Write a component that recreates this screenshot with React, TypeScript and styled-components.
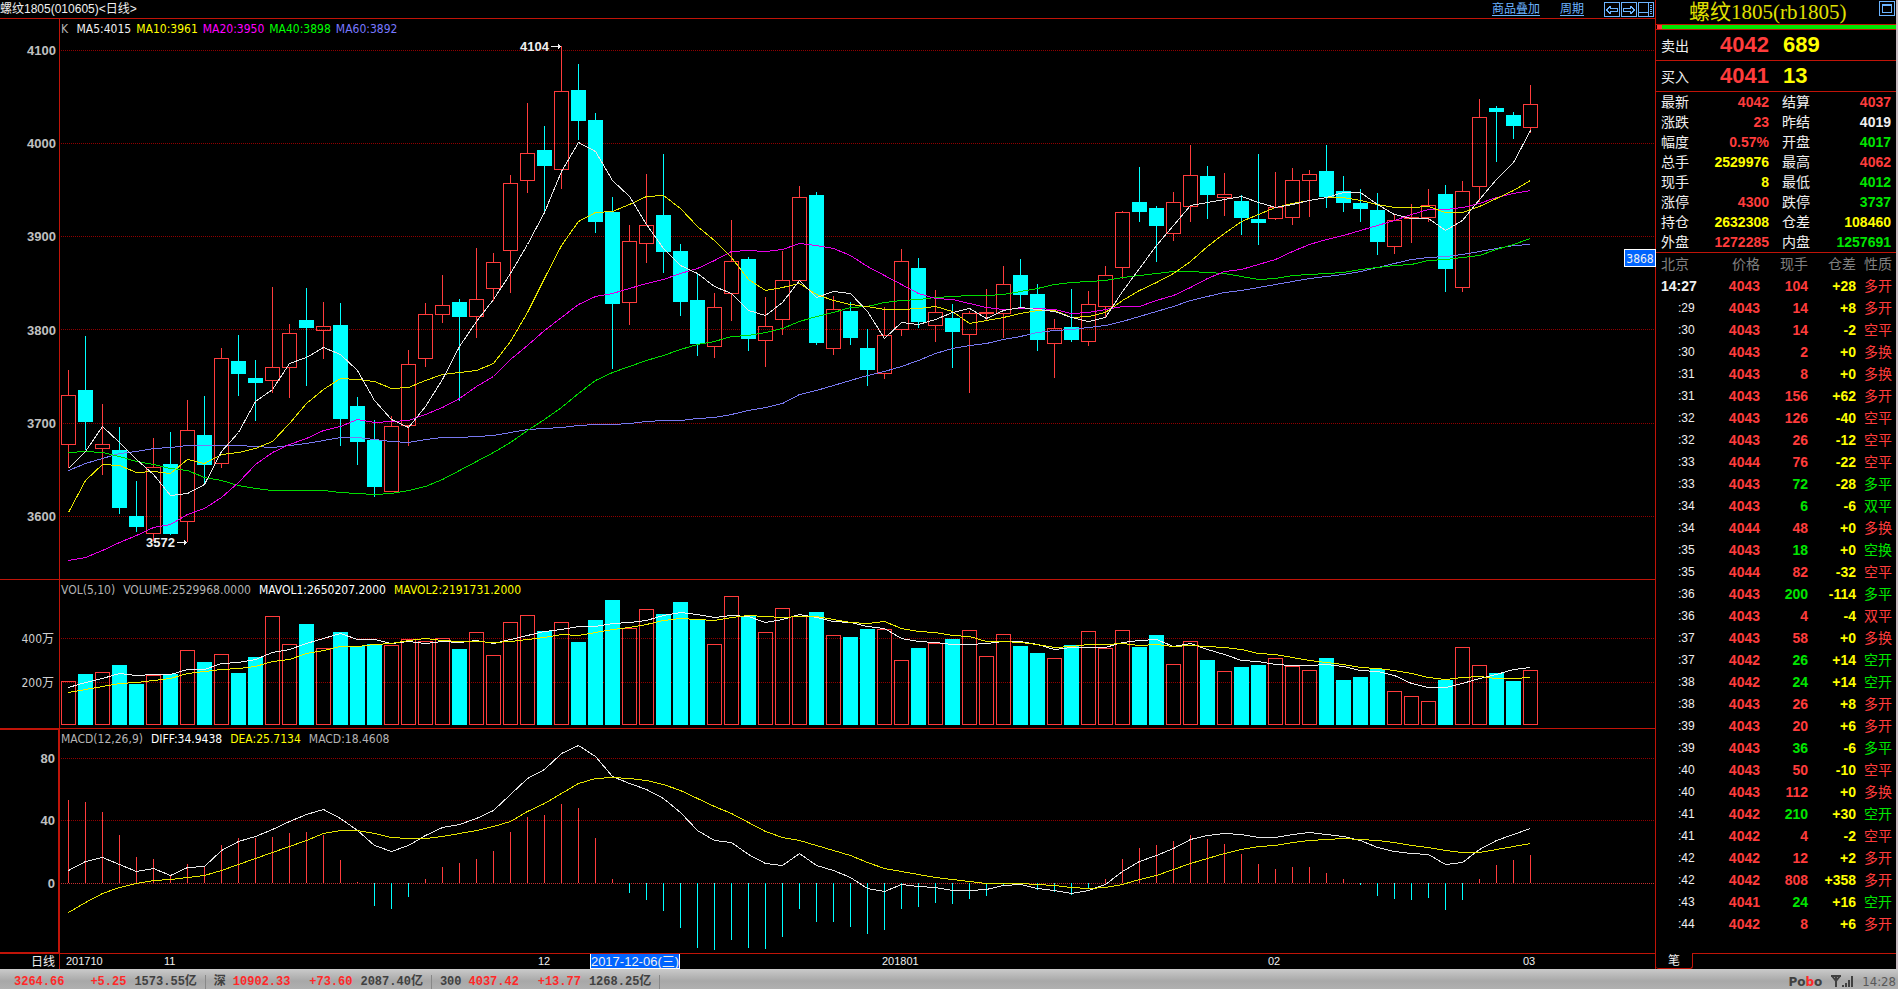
import React from "react";
import styled, { createGlobalStyle } from "styled-components";

const red = "#ff3c3c";
const green = "#00e600";
const yellow = "#ffff00";
const white = "#f0f0f0";
const grey = "#b4b4b4";
const cyan = "#00ffff";
const frame = "#c01408";
const sky = "#6cb4ff";

const sans = '"Liberation Sans", "Noto Sans CJK SC", sans-serif';
const condensed = '"DejaVu Sans Condensed", "Noto Sans CJK SC", sans-serif';
const serif = '"Liberation Serif", "Noto Sans CJK SC", serif';
const mono = '"Liberation Mono", "Noto Sans CJK SC", monospace';

/* ---------- chart data (chart units, one unit per pixel at 1:1) ---------- */

// u = rising, d = falling; then high, body top, body bottom, low
type Candle = ["u" | "d", number, number, number, number];

const candles: Candle[] = [
  ["u", 370, 395, 444, 468], ["d", 336, 390, 422, 450], ["u", 404, 444, 448, 475],
  ["d", 427, 450, 508, 514], ["d", 481, 516, 527, 532], ["u", 438, 467, 533, 541],
  ["d", 432, 464, 534, 535], ["u", 400, 430, 521, 542], ["d", 396, 435, 465, 484],
  ["u", 348, 358, 463, 468], ["d", 335, 361, 374, 396], ["d", 360, 378, 383, 421],
  ["u", 287, 367, 380, 393], ["u", 324, 333, 367, 398], ["d", 288, 320, 328, 386],
  ["u", 302, 326, 330, 359], ["d", 303, 325, 419, 446], ["d", 397, 406, 442, 465],
  ["d", 420, 440, 487, 497], ["u", 416, 426, 491, 492], ["u", 350, 364, 425, 446],
  ["u", 303, 314, 358, 367], ["u", 275, 305, 314, 323], ["d", 299, 302, 317, 401],
  ["u", 248, 299, 316, 338], ["u", 253, 262, 288, 301], ["u", 175, 183, 250, 293],
  ["u", 103, 153, 180, 193], ["d", 126, 150, 166, 213], ["u", 46, 91, 169, 189],
  ["d", 64, 90, 121, 140], ["d", 113, 120, 222, 233], ["d", 197, 212, 304, 369],
  ["u", 225, 241, 302, 325], ["u", 174, 225, 243, 263], ["d", 154, 215, 252, 273],
  ["d", 244, 251, 302, 316], ["d", 274, 300, 344, 356], ["u", 293, 307, 346, 358],
  ["u", 220, 261, 293, 321], ["d", 257, 259, 339, 351], ["u", 297, 326, 340, 367],
  ["u", 251, 280, 319, 335], ["u", 186, 197, 280, 280], ["d", 192, 195, 343, 345],
  ["u", 296, 309, 348, 355], ["d", 302, 311, 338, 345], ["d", 329, 348, 370, 386],
  ["u", 307, 335, 373, 379], ["u", 249, 261, 329, 336], ["d", 258, 268, 322, 328],
  ["u", 290, 312, 325, 342], ["d", 304, 318, 332, 368], ["u", 311, 313, 334, 393],
  ["u", 289, 312, 313, 320], ["u", 266, 284, 313, 338], ["d", 259, 275, 295, 307],
  ["d", 284, 294, 340, 351], ["u", 319, 328, 343, 378], ["d", 289, 327, 340, 342],
  ["u", 291, 304, 341, 346], ["u", 266, 275, 306, 317], ["u", 211, 212, 267, 279],
  ["d", 167, 202, 212, 222], ["d", 206, 208, 226, 262], ["u", 192, 202, 233, 241],
  ["u", 145, 175, 206, 222], ["d", 166, 176, 195, 219], ["u", 173, 194, 197, 216],
  ["d", 195, 201, 218, 235], ["d", 154, 219, 223, 245], ["u", 172, 207, 218, 220],
  ["u", 168, 180, 217, 225], ["u", 170, 174, 180, 217], ["d", 145, 171, 197, 208],
  ["d", 176, 191, 203, 212], ["d", 189, 203, 209, 222], ["d", 193, 210, 242, 255],
  ["u", 215, 220, 246, 254], ["u", 204, 217, 218, 243], ["u", 189, 205, 217, 222],
  ["d", 185, 194, 269, 292], ["u", 181, 191, 287, 292], ["u", 99, 117, 186, 202],
  ["d", 106, 108, 112, 162], ["d", 112, 115, 126, 139], ["u", 85, 104, 127, 133],
];

const ma5 = [468, 451, 426, 442, 459, 474, 495, 493, 484, 451, 432, 401, 389, 363, 357, 347, 354, 370, 400, 419, 427, 406, 379, 346, 321, 299, 273, 244, 212, 171, 142, 151, 180, 196, 224, 248, 265, 273, 286, 293, 310, 315, 302, 280, 297, 291, 293, 311, 338, 322, 324, 319, 312, 308, 318, 310, 307, 309, 311, 317, 321, 317, 291, 268, 245, 225, 205, 202, 199, 196, 202, 207, 204, 200, 197, 192, 192, 204, 214, 218, 218, 230, 220, 199, 179, 162, 130];
const ma10 = [512, 480, 464, 465, 472, 471, 473, 459, 463, 454, 452, 448, 441, 423, 403, 389, 378, 379, 381, 388, 387, 380, 374, 372, 370, 363, 341, 312, 278, 245, 221, 212, 211, 204, 196, 195, 208, 226, 240, 257, 279, 290, 287, 283, 294, 300, 304, 306, 309, 309, 308, 306, 311, 323, 320, 317, 313, 310, 310, 317, 316, 312, 300, 290, 282, 273, 261, 246, 233, 221, 214, 207, 203, 200, 197, 197, 200, 204, 207, 207, 206, 212, 212, 206, 198, 190, 180];
const ma20 = [560, 557, 550, 542, 535, 527, 524, 514, 508, 497, 482, 464, 452, 444, 438, 430, 426, 419, 422, 421, 420, 414, 407, 398, 386, 376, 359, 345, 330, 317, 304, 296, 293, 288, 283, 279, 273, 268, 260, 251, 250, 251, 249, 243, 245, 248, 255, 266, 275, 284, 293, 298, 299, 303, 307, 309, 308, 308, 309, 313, 312, 309, 306, 306, 300, 295, 287, 278, 271, 269, 264, 259, 251, 244, 239, 235, 230, 225, 220, 214, 209, 209, 207, 203, 197, 193, 190];
const ma40 = [452, 451, 452, 456, 461, 464, 468, 470, 477, 480, 485, 488, 490, 490, 490, 490, 492, 493, 494, 493, 490, 486, 479, 470, 461, 452, 442, 430, 419, 407, 393, 380, 372, 366, 360, 355, 349, 344, 341, 336, 335, 332, 328, 321, 316, 312, 307, 306, 302, 300, 299, 297, 296, 295, 295, 294, 291, 288, 284, 282, 281, 280, 277, 275, 273, 271, 271, 272, 273, 276, 279, 278, 275, 274, 273, 272, 269, 267, 265, 264, 260, 259, 257, 255, 249, 244, 238];
const ma60 = [470, 463, 458, 453, 451, 448, 447, 445, 445, 445, 445, 446, 447, 445, 443, 440, 437, 437, 439, 441, 442, 439, 437, 437, 436, 435, 432, 429, 428, 427, 425, 424, 424, 423, 421, 420, 420, 418, 417, 414, 410, 407, 403, 394, 390, 385, 380, 375, 371, 366, 360, 353, 348, 345, 343, 339, 336, 332, 330, 329, 327, 325, 321, 316, 311, 306, 300, 296, 292, 290, 287, 284, 281, 278, 276, 274, 271, 267, 263, 259, 257, 256, 254, 251, 248, 245, 244];

const volumes = [681, 674, 672, 665, 684, 675, 674, 650, 662, 654, 673, 657, 616, 644, 624, 648, 632, 646, 644, 645, 639, 641, 638, 649, 632, 655, 622, 615, 631, 622, 642, 620, 600, 628, 609, 614, 602, 619, 644, 596, 616, 632, 608, 616, 612, 635, 637, 629, 629, 660, 648, 643, 639, 630, 656, 634, 646, 653, 658, 645, 631, 648, 630, 647, 635, 664, 641, 660, 671, 667, 665, 658, 666, 670, 658, 680, 677, 669, 691, 696, 701, 680, 647, 665, 673, 681, 670];
const mavol1 = [687, 682, 678, 673, 675, 674, 674, 669, 669, 663, 662, 659, 652, 649, 643, 638, 633, 639, 639, 643, 641, 643, 641, 642, 640, 643, 639, 635, 631, 629, 626, 626, 623, 622, 620, 615, 612, 614, 617, 615, 616, 622, 619, 614, 617, 621, 622, 626, 628, 638, 641, 642, 644, 644, 643, 641, 641, 644, 649, 647, 647, 647, 642, 640, 639, 646, 643, 649, 654, 660, 661, 664, 665, 665, 664, 666, 670, 671, 675, 683, 687, 687, 683, 678, 674, 669, 667];
const mavol2 = [692, 689, 686, 683, 682, 680, 678, 673, 671, 669, 668, 666, 661, 659, 653, 650, 646, 646, 644, 643, 640, 638, 640, 641, 641, 642, 641, 639, 637, 634, 635, 632, 629, 627, 624, 620, 618, 619, 620, 617, 615, 616, 617, 616, 616, 619, 622, 623, 621, 628, 631, 632, 635, 636, 641, 641, 642, 644, 647, 646, 644, 644, 643, 645, 644, 646, 645, 646, 647, 649, 653, 654, 657, 660, 662, 664, 667, 668, 670, 673, 677, 679, 677, 676, 678, 678, 677];

const ZERO = 883;
const macd = [800, 802, 812, 835, 857, 859, 876, 864, 866, 845, 838, 838, 837, 833, 832, 835, 860, 882, 906, 909, 897, 879, 867, 863, 859, 851, 832, 817, 815, 804, 808, 838, 879, 893, 900, 911, 928, 948, 950, 940, 948, 949, 937, 909, 922, 922, 927, 934, 930, 909, 907, 903, 904, 899, 896, 885, 884, 890, 892, 895, 888, 879, 859, 848, 845, 841, 835, 839, 844, 854, 864, 869, 867, 867, 873, 879, 885, 896, 899, 900, 898, 910, 900, 879, 865, 860, 855];
const diff = [870, 861, 857, 864, 871, 868, 875, 867, 866, 850, 841, 836, 829, 821, 814, 809, 818, 830, 845, 851, 845, 835, 827, 824, 818, 810, 794, 778, 769, 753, 745, 756, 776, 783, 789, 798, 812, 830, 840, 842, 854, 863, 865, 853, 865, 870, 877, 888, 891, 884, 886, 887, 890, 890, 889, 885, 884, 888, 890, 893, 890, 884, 871, 861, 855, 848, 839, 835, 833, 834, 837, 837, 834, 832, 834, 836, 840, 847, 851, 853, 854, 864, 862, 849, 840, 834, 828];
const dea = [912, 902, 893, 887, 883, 880, 879, 877, 875, 870, 864, 858, 852, 846, 840, 833, 830, 830, 833, 837, 838, 838, 836, 833, 830, 826, 821, 811, 803, 793, 783, 778, 777, 778, 780, 784, 790, 798, 806, 813, 822, 831, 837, 840, 845, 850, 855, 862, 868, 871, 874, 877, 879, 881, 883, 883, 883, 884, 885, 887, 888, 887, 884, 879, 875, 869, 863, 858, 853, 849, 846, 845, 842, 840, 839, 838, 839, 840, 842, 845, 847, 850, 852, 852, 849, 846, 843];

const cx = (i: number) => 68.5 + 17 * i;

/* ---------- quote data ---------- */

type Cell = [label: string, value: string, color: string];
const stats: [Cell, Cell][] = [
  [["最新", "4042", red], ["结算", "4037", red]],
  [["涨跌", "23", red], ["昨结", "4019", white]],
  [["幅度", "0.57%", red], ["开盘", "4017", green]],
  [["总手", "2529976", yellow], ["最高", "4062", red]],
  [["现手", "8", yellow], ["最低", "4012", green]],
  [["涨停", "4300", red], ["跌停", "3737", green]],
  [["持仓", "2632308", yellow], ["仓差", "108460", yellow]],
  [["外盘", "1272285", red], ["内盘", "1257691", green]],
];

// time, price, lots, open-interest change, kind, sold at bid
type Tick = [string, string, string, string, string, boolean?];
const ticks: Tick[] = [
  ["14:27", "4043", "104", "+28", "多开"],
  [":29", "4043", "14", "+8", "多开"],
  [":30", "4043", "14", "-2", "空平"],
  [":30", "4043", "2", "+0", "多换"],
  [":31", "4043", "8", "+0", "多换"],
  [":31", "4043", "156", "+62", "多开"],
  [":32", "4043", "126", "-40", "空平"],
  [":32", "4043", "26", "-12", "空平"],
  [":33", "4044", "76", "-22", "空平"],
  [":33", "4043", "72", "-28", "多平", true],
  [":34", "4043", "6", "-6", "双平", true],
  [":34", "4044", "48", "+0", "多换"],
  [":35", "4043", "18", "+0", "空换", true],
  [":35", "4044", "82", "-32", "空平"],
  [":36", "4043", "200", "-114", "多平", true],
  [":36", "4043", "4", "-4", "双平"],
  [":37", "4043", "58", "+0", "多换"],
  [":37", "4042", "26", "+14", "空开", true],
  [":38", "4042", "24", "+14", "空开", true],
  [":38", "4043", "26", "+8", "多开"],
  [":39", "4043", "20", "+6", "多开"],
  [":39", "4043", "36", "-6", "多平", true],
  [":40", "4043", "50", "-10", "空平"],
  [":40", "4043", "112", "+0", "多换"],
  [":41", "4042", "210", "+30", "空开", true],
  [":41", "4042", "4", "-2", "空平"],
  [":42", "4042", "12", "+2", "多开"],
  [":42", "4042", "808", "+358", "多开"],
  [":43", "4041", "24", "+16", "空开", true],
  [":44", "4042", "8", "+6", "多开"],
];

const indices = [
  { label: "", price: "3264.66", change: "+5.25", amount: "1573.55亿" },
  { label: "深", price: "10902.33", change: "+73.60", amount: "2087.40亿" },
  { label: "300", price: "4037.42", change: "+13.77", amount: "1268.25亿" },
];

/* ---------- styles ---------- */

const GlobalStyle = createGlobalStyle`
  *, *::before, *::after { box-sizing: border-box; }
  body { margin: 0; background: #000; font-family: ${sans}; }
`;

const Page = styled.div`
  min-height: 100vh;
  display: flex;
  flex-direction: column;
  background: #000;
  color: ${white};
`;

const Workspace = styled.div`
  flex: 1;
  display: flex;
`;

const Charts = styled.main`
  flex: 1;
  min-width: 0;
`;

const TitleBar = styled.header`
  height: 19px;
  padding-right: 1px;
  border-bottom: 1px solid ${frame};
  display: flex;
  align-items: center;
  font-size: 12px;
  line-height: 18px;
`;

const ChartTitle = styled.h1`
  margin: 0;
  font-size: 12px;
  font-weight: 400;
  line-height: 18px;
`;

const Tools = styled.nav`
  margin-left: auto;
  display: flex;
  align-items: center;
  gap: 20px;
`;

const ToolLink = styled.a`
  color: ${sky};
  text-decoration: underline;
  text-underline-offset: 2px;
`;

const ToolButtons = styled.div`
  display: flex;
  gap: 1px;
`;

const IconButton = styled.button`
  display: block;
  width: 16px;
  height: 15px;
  padding: 0;
  border: 0;
  background: none;
  color: ${sky};

  svg { display: block; }
`;

const Panel = styled.section`
  position: relative;
  border-bottom: 1px solid ${frame};
`;

const Legend = styled.div<{ $gap: number }>`
  position: absolute;
  top: 1px;
  left: 61px;
  display: flex;
  gap: ${(p) => p.$gap}px;
  font-family: ${condensed};
  font-size: 12px;
  line-height: 18px;
`;

const LegendItem = styled.span<{ $color: string }>`
  color: ${(p) => p.$color};
`;

const Plot = styled.svg`
  display: block;
  width: 100%;
  height: auto;
  overflow: visible;
`;

const AxisText = styled.text`
  font: bold 13px ${sans};
  fill: #c0c0c0;
  text-anchor: end;
`;

const AxisUnitText = styled(AxisText)`
  font: 12px ${condensed};
  fill: #d0d0d0;
`;

const NoteText = styled.text`
  font: bold 13px ${sans};
  fill: ${white};
`;

const DateText = styled.text`
  font: 11px ${sans};
  fill: ${white};
`;

const PeriodText = styled(DateText)`
  font-size: 12px;
  text-anchor: end;
`;

const TagText = styled.text`
  font: 12px ${condensed};
  fill: ${white};
  text-anchor: middle;
`;

const CursorText = styled(TagText)`
  font: 13px ${sans};
`;

const Sidebar = styled.aside`
  width: 243px;
  flex: none;
  display: flex;
  flex-direction: column;
  border-left: 1px solid ${frame};
  border-right: 2px solid #c8bcc2;
`;

const Contract = styled.div`
  height: 25px;
  display: flex;
  align-items: flex-start;
  justify-content: space-between;
  padding: 1px 1px 0 33px;
  border-bottom: 1px solid ${frame};
`;

const ContractName = styled.h2`
  margin: 0;
  font: 21px/23px ${serif};
  color: #e0e000;
`;

const Balance = styled.div`
  height: 5px;
  padding-left: 1px;
  display: flex;
  border-bottom: 1px solid ${frame};
`;

const BalancePart = styled.span<{ $color: string; $grow: number }>`
  flex: ${(p) => p.$grow};
  background: ${(p) => p.$color};
`;

const Quote = styled.div`
  height: 31px;
  display: grid;
  grid-template-columns: 44px 64px 1fr;
  align-items: center;
  padding-left: 5px;
  border-bottom: 1px solid ${frame};
  font-size: 14px;
`;

const QuotePrice = styled.strong<{ $color: string }>`
  font-size: 22px;
  line-height: 30px;
  color: ${(p) => p.$color};
  text-align: right;
`;

const QuoteLots = styled(QuotePrice)`
  text-align: left;
  padding-left: 14px;
`;

const Table = styled.table`
  width: 100%;
  border-collapse: collapse;
  table-layout: fixed;
  font-size: 14px;
`;

const StatsTable = styled(Table)`
  border-bottom: 1px solid ${frame};
`;

const StatLabel = styled.th`
  height: 20px;
  padding: 0 0 0 5px;
  font-weight: 400;
  line-height: 20px;
  text-align: left;
`;

const StatValue = styled.td<{ $color: string }>`
  padding: 0;
  font-weight: 700;
  line-height: 20px;
  text-align: right;
  color: ${(p) => p.$color};
`;

const TickHead = styled.th<{ $align?: "left" }>`
  height: 22px;
  padding: 0 0 0 ${(p) => (p.$align ? 5 : 0)}px;
  font-weight: 400;
  line-height: 22px;
  text-align: ${(p) => p.$align ?? "right"};
  color: #808080;
`;

const TickTime = styled.td<{ $full: boolean }>`
  height: 22px;
  padding: 0 0 0 ${(p) => (p.$full ? 5 : 22)}px;
  font-size: ${(p) => (p.$full ? 14 : 12)}px;
  font-weight: ${(p) => (p.$full ? 700 : 400)};
  line-height: 22px;
`;

const TickCell = styled.td<{ $color: string; $plain?: boolean }>`
  padding: 0;
  font-weight: ${(p) => (p.$plain ? 400 : 700)};
  line-height: 22px;
  text-align: right;
  white-space: nowrap;
  color: ${(p) => p.$color};
`;

const Tabs = styled.div`
  margin-top: auto;
  height: 16px;
  display: flex;
`;

const Tab = styled.button`
  width: 37px;
  padding: 0;
  border: 1px solid ${frame};
  border-width: 0 1px 1px 0;
  border-radius: 0 0 3px 3px;
  background: none;
  color: ${white};
  font: 12px/14px ${sans};
`;

const TabRest = styled.div`
  flex: 1;
  border-top: 1px solid ${frame};
`;

const StatusBar = styled.footer`
  height: 20px;
  display: flex;
  align-items: center;
  padding: 5px 2px 0 14px;
  background: linear-gradient(#cacaca, #a8a8a8 60%, #b0b0b0);
  color: #404040;
  font: bold 12px/14px ${mono};
`;

const IndexItem = styled.div`
  display: flex;
  align-items: center;
  padding-right: 8px;
  margin-right: 8px;
  border-right: 1px solid #888;
`;

const IndexLabel = styled.span`
  margin-right: 7px;
`;

const IndexPrice = styled.span`
  color: #ff2828;
`;

const IndexChange = styled(IndexPrice)`
  width: 62px;
  margin-right: 8px;
  text-align: right;
`;

const StatusRight = styled.div`
  margin-left: auto;
  display: flex;
  align-items: center;
  gap: 9px;
`;

const Brand = styled.span`
  font: bold 12px/14px "DejaVu Sans", sans-serif;
`;

const BrandAccent = styled.span`
  color: #ff2828;
`;

const Clock = styled.time`
  font: 13px/14px ${condensed};
  color: #585858;
`;

/* ---------- chart parts ---------- */

const Grid = ({ rows, color = "#900000" }: { rows: number[]; color?: string }) => (
  <g stroke={color} strokeDasharray="1 1">
    {rows.map((y) => (
      <line key={y} x1={61} x2={1655} y1={y + 0.5} y2={y + 0.5} />
    ))}
  </g>
);

const Curve = ({ values, color }: { values: number[]; color: string }) => (
  <polyline
    fill="none"
    stroke={color}
    points={values.map((y, i) => `${cx(i)},${y + 0.5}`).join(" ")}
  />
);

const AxisLine = ({ from, to }: { from: number; to: number }) => (
  <line x1={59.5} x2={59.5} y1={from} y2={to} stroke={frame} />
);

const CandleMark = ({ candle, i }: { candle: Candle; i: number }) => {
  const [dir, high, top, bottom, low] = candle;
  const x = cx(i);
  if (dir === "d") {
    return (
      <g>
        <line x1={x} x2={x} y1={high} y2={low} stroke={cyan} />
        <rect x={x - 7.5} y={top} width={15} height={bottom - top} fill={cyan} />
      </g>
    );
  }
  return (
    <g stroke={red} fill="none">
      <line x1={x} x2={x} y1={high} y2={top} />
      <line x1={x} x2={x} y1={bottom} y2={low} />
      <rect x={x - 7} y={top + 0.5} width={14} height={bottom - top} />
    </g>
  );
};

const Note = ({ x, y, text }: { x: number; y: number; text: string }) => (
  <g>
    <NoteText x={x} y={y + 5}>{text}</NoteText>
    <path d={`M${x + 31} ${y + 0.5}h10M${x + 38.5} ${y - 2}v5M${x + 39.5} ${y - 1}v3`} stroke={white} />
  </g>
);

const PriceChart = () => (
  <Plot viewBox="0 19 1655 560" role="img" aria-label="K线图">
    <g shapeRendering="crispEdges">
      <Grid rows={[50, 143, 236, 329, 423, 516]} />
      <AxisLine from={19} to={579} />
      {candles.map((c, i) => <CandleMark key={i} candle={c} i={i} />)}
      <Curve values={ma60} color="#7878f0" />
      <Curve values={ma40} color="#00dc00" />
      <Curve values={ma20} color="#e600e6" />
      <Curve values={ma10} color="#e6e600" />
      <Curve values={ma5} color="#e6e6e6" />
    </g>
    {[4100, 4000, 3900, 3800, 3700, 3600].map((v, i) => (
      <AxisText key={v} x={56} y={55 + Math.round(i * 93.2)}>{v}</AxisText>
    ))}
    <Note x={520} y={46} text="4104" />
    <Note x={146} y={542} text="3572" />
    <rect x={1624.5} y={249.5} width={31} height={17} fill="#0064ff" stroke="#fff" />
    <TagText x={1640} y={263}>3868</TagText>
  </Plot>
);

const VolumeChart = () => (
  <Plot viewBox="0 580 1655 148" role="img" aria-label="成交量">
    <g shapeRendering="crispEdges">
      <Grid rows={[638, 682]} />
      <AxisLine from={580} to={728} />
      {volumes.map((y, i) =>
        candles[i][0] === "d" ? (
          <rect key={i} x={cx(i) - 7.5} y={y} width={15} height={725 - y} fill={cyan} />
        ) : (
          <rect key={i} x={cx(i) - 7} y={y + 0.5} width={14} height={724 - y} fill="none" stroke={red} />
        ),
      )}
      <Curve values={mavol1} color="#f0f0f0" />
      <Curve values={mavol2} color="#f0f000" />
    </g>
    <AxisUnitText x={54} y={643}>400万</AxisUnitText>
    <AxisUnitText x={54} y={687}>200万</AxisUnitText>
  </Plot>
);

const MacdChart = () => (
  <Plot viewBox="0 729 1655 224" role="img" aria-label="MACD">
    <g shapeRendering="crispEdges">
      <Grid rows={[758, 820]} />
      <Grid rows={[ZERO]} color="#c83030" />
      <path d="M0 729.5H59M58.5 729V953M0 952.5H59" stroke={frame} />
      <AxisLine from={729} to={953} />
      {macd.map((y, i) => (
        <line key={i} x1={cx(i)} x2={cx(i)} y1={ZERO} y2={y} stroke={y < ZERO ? red : cyan} />
      ))}
      <Curve values={diff} color="#e6e6e6" />
      <Curve values={dea} color="#e6e600" />
    </g>
    <AxisText x={55} y={763}>80</AxisText>
    <AxisText x={55} y={825}>40</AxisText>
    <AxisText x={55} y={888}>0</AxisText>
  </Plot>
);

const DateAxis = () => (
  <Plot viewBox="0 954 1655 15" role="img" aria-label="日期">
    <line x1={59.5} x2={59.5} y1={954} y2={969} stroke={frame} />
    <PeriodText x={55} y={966}>日线</PeriodText>
    <DateText x={66} y={965}>201710</DateText>
    <DateText x={164} y={965}>11</DateText>
    <DateText x={538} y={965}>12</DateText>
    <DateText x={882} y={965}>201801</DateText>
    <DateText x={1268} y={965}>02</DateText>
    <DateText x={1523} y={965}>03</DateText>
    <rect x={590.5} y={953.5} width={89} height={15} fill="#0064ff" stroke="#fff" />
    <CursorText x={635} y={966}>2017-12-06(三)</CursorText>
  </Plot>
);

const BoxIcon = ({ children }: { children: React.ReactNode }) => (
  <svg width="16" height="15" viewBox="0 0 16 15" fill="none" stroke="currentColor" shapeRendering="crispEdges" aria-hidden="true">
    <rect x=".5" y=".5" width="15" height="14" />
    {children}
  </svg>
);

const SignalIcon = () => (
  <svg width="22" height="13" viewBox="0 0 22 13" fill="none" stroke="#404040" aria-hidden="true">
    <path d="M0 1h10M1 1l4 5 4-5M5 1v11" strokeWidth="2" />
    <path d="M12 12v-2M15 12V8M18 12V5M21 12V1" strokeWidth="2" />
  </svg>
);

/* ---------- page ---------- */

export default function App() {
  return (
    <Page>
      <GlobalStyle />
      <Workspace>
        <Charts>
          <TitleBar>
            <ChartTitle>螺纹1805(010605)&lt;日线&gt;</ChartTitle>
            <Tools>
              <ToolLink href="#overlay">商品叠加</ToolLink>
              <ToolLink href="#period">周期</ToolLink>
              <ToolButtons>
                <IconButton type="button" aria-label="前一个">
                  <BoxIcon><path d="M2.5 7.5h1v-1h1v-1h1v-1h1v2h7v3h-7v2h-1v-1h-1v-1h-1v-1h-1z" /></BoxIcon>
                </IconButton>
                <IconButton type="button" aria-label="后一个">
                  <BoxIcon><path d="M13.5 7.5h-1v-1h-1v-1h-1v-1h-1v2h-7v3h7v2h1v-1h1v-1h1v-1h1z" /></BoxIcon>
                </IconButton>
                <IconButton type="button" aria-label="布局">
                  <BoxIcon><path d="M10.5 0v15M0 10.5h10M12 3.5h2M12 5.5h2M12 7.5h2M12 9.5h2M12 11.5h2" /></BoxIcon>
                </IconButton>
              </ToolButtons>
            </Tools>
          </TitleBar>

          <Panel>
            <PriceChart />
            <Legend $gap={5}>
              <LegendItem $color={grey}>K&nbsp;</LegendItem>
              <LegendItem $color={white}>MA5:4015</LegendItem>
              <LegendItem $color={yellow}>MA10:3961</LegendItem>
              <LegendItem $color="#ff00ff">MA20:3950</LegendItem>
              <LegendItem $color="#00ff00">MA40:3898</LegendItem>
              <LegendItem $color="#7878ff">MA60:3892</LegendItem>
            </Legend>
          </Panel>
          <Panel>
            <VolumeChart />
            <Legend $gap={8}>
              <LegendItem $color={grey}>VOL(5,10)</LegendItem>
              <LegendItem $color={grey}>VOLUME:2529968.0000</LegendItem>
              <LegendItem $color="#fff">MAVOL1:2650207.2000</LegendItem>
              <LegendItem $color={yellow}>MAVOL2:2191731.2000</LegendItem>
            </Legend>
          </Panel>
          <Panel>
            <MacdChart />
            <Legend $gap={8}>
              <LegendItem $color={grey}>MACD(12,26,9)</LegendItem>
              <LegendItem $color="#fff">DIFF:34.9438</LegendItem>
              <LegendItem $color={yellow}>DEA:25.7134</LegendItem>
              <LegendItem $color={grey}>MACD:18.4608</LegendItem>
            </Legend>
          </Panel>
          <DateAxis />
        </Charts>

        <Sidebar>
          <Contract>
            <ContractName>螺纹1805(rb1805)</ContractName>
            <IconButton type="button" aria-label="最大化">
              <BoxIcon><path d="M3.5 3.5h9v8h-9zM3 4.5h10" /></BoxIcon>
            </IconButton>
          </Contract>
          <Balance>
            <BalancePart $color={red} $grow={2} />
            <BalancePart $color={green} $grow={98} />
          </Balance>
          <Quote>
            <span>卖出</span>
            <QuotePrice $color={red}>4042</QuotePrice>
            <QuoteLots $color={yellow}>689</QuoteLots>
          </Quote>
          <Quote>
            <span>买入</span>
            <QuotePrice $color={red}>4041</QuotePrice>
            <QuoteLots $color={yellow}>13</QuoteLots>
          </Quote>
          <StatsTable>
            <colgroup>
              <col width="40" />
              <col width="73" />
              <col width="8" />
              <col width="40" />
              <col />
              <col width="5" />
            </colgroup>
            <tbody>
              {stats.map(([a, b]) => (
                <tr key={a[0]}>
                  <StatLabel scope="row">{a[0]}</StatLabel>
                  <StatValue $color={a[2]}>{a[1]}</StatValue>
                  <td />
                  <StatLabel scope="row">{b[0]}</StatLabel>
                  <StatValue $color={b[2]}>{b[1]}</StatValue>
                  <td />
                </tr>
              ))}
            </tbody>
          </StatsTable>
          <Table>
            <colgroup>
              <col width="44" />
              <col width="60" />
              <col width="48" />
              <col width="48" />
              <col />
              <col width="4" />
            </colgroup>
            <thead>
              <tr>
                <TickHead $align="left">北京</TickHead>
                <TickHead>价格</TickHead>
                <TickHead>现手</TickHead>
                <TickHead>仓差</TickHead>
                <TickHead>性质</TickHead>
                <td />
              </tr>
            </thead>
            <tbody>
              {ticks.map(([time, price, lots, change, kind, sold], i) => (
                <tr key={i}>
                  <TickTime $full={time.length > 3}>{time}</TickTime>
                  <TickCell $color={red}>{price}</TickCell>
                  <TickCell $color={sold ? green : red}>{lots}</TickCell>
                  <TickCell $color={yellow}>{change}</TickCell>
                  <TickCell $color={sold ? green : red} $plain>{kind}</TickCell>
                  <td />
                </tr>
              ))}
            </tbody>
          </Table>
          <Tabs role="tablist">
            <Tab type="button" role="tab" aria-selected="true">笔</Tab>
            <TabRest />
          </Tabs>
        </Sidebar>
      </Workspace>

      <StatusBar>
        {indices.map((q) => (
          <IndexItem key={q.price}>
            {q.label && <IndexLabel>{q.label}</IndexLabel>}
            <IndexPrice>{q.price}</IndexPrice>
            <IndexChange>{q.change}</IndexChange>
            <span>{q.amount}</span>
          </IndexItem>
        ))}
        <StatusRight>
          <Brand>Po<BrandAccent>b</BrandAccent>o</Brand>
          <SignalIcon />
          <Clock>14:28</Clock>
        </StatusRight>
      </StatusBar>
    </Page>
  );
}
